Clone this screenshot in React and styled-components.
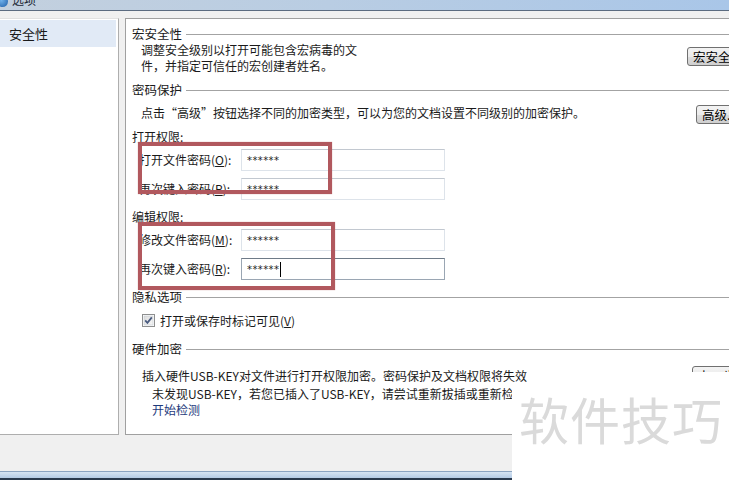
import React from 'react';
import styled, { createGlobalStyle } from 'styled-components';

const Global = createGlobalStyle`
  html, body {
    margin: 0;
    padding: 0;
    width: 729px;
    height: 480px;
    overflow: hidden;
    background: #f0f0f0;
  }
  body {
    font-family: "Noto Sans CJK SC", "Noto Sans", sans-serif;
    font-size: 12px;
    color: #1a1a1a;
  }
`;

const Window = styled.div`
  position: relative;
  width: 729px;
  height: 480px;
  overflow: hidden;
  display: flex;
  flex-direction: column;
  background: #f0f0f0;
`;

const TitleBar = styled.div`
  height: 10px;
  flex-shrink: 0;
  display: flex;
  align-items: flex-start;
  gap: 4px;
  overflow: hidden;
  background: linear-gradient(to right, #c3d0de 0%, #b9cde3 45%, #a9c6e8 100%);
  border-bottom: 1px solid #5b6b80;
`;

const TitleIcon = styled.div`
  width: 11px;
  height: 11px;
  margin: -4px 0 0 -3px;
  border-radius: 50%;
  background: radial-gradient(circle at 40% 40%, #6fb0ea, #1f5fa8);
`;

const TitleText = styled.span`
  margin-top: -8px;
  line-height: 16px;
  color: #1b2633;
`;

const Panels = styled.div`
  display: flex;
  gap: 6px;
  padding-top: 7px;
  height: 417px;
  flex-shrink: 0;
`;

const NavList = styled.div`
  width: 119px;
  flex-shrink: 0;
  background: #fff;
  border-right: 1px solid #aeaeae;
  border-bottom: 1px solid #aeaeae;
  border-top: 1px solid #e2e2e2;
  padding-top: 1px;
  box-sizing: border-box;
`;

const NavItem = styled.div`
  height: 27px;
  line-height: 27px;
  margin-right: 2px;
  padding-left: 9px;
  font-size: 13px;
  background: ${p => (p.$selected ? '#e1eaf6' : 'transparent')};
`;

const Content = styled.div`
  width: 670px;
  flex-shrink: 0;
  box-sizing: border-box;
  background: #fff;
  border: 1px solid #a0a0a0;
  padding: 7px 27px 0 6px;
  display: flex;
  flex-direction: column;
`;

const Heading = styled.div`
  display: flex;
  align-items: center;
  height: 16px;
  line-height: 16px;
  margin-top: ${p => p.$mt || 0}px;
  font-size: 12.5px;
  &::after {
    content: '';
    flex: 1;
    height: 1px;
    margin-left: 4px;
    background: #a3a3a3;
    margin-right: -27px;
  }
`;

const SubHeading = styled.div`
  height: 16px;
  line-height: 16px;
  margin-top: ${p => p.$mt || 0}px;
`;

const Row = styled.div`
  display: flex;
  justify-content: space-between;
  align-items: flex-start;
  margin-top: ${p => p.$mt || 0}px;
  padding-left: ${p => p.$indent || 9}px;
`;

const Text = styled.div`
  line-height: 16px;
  padding-left: ${p => p.$indent || 0}px;
  margin-top: ${p => p.$mt || 0}px;
  white-space: nowrap;
  color: ${p => p.$link ? '#1e3a7c' : 'inherit'};
`;

const Button = styled.button`
  width: ${p => p.$w}px;
  height: 19px;
  flex-shrink: 0;
  margin-top: ${p => p.$mt || 0}px;
  padding: 0 0 0 5px;
  text-align: left;
  font: inherit;
  font-size: 12.5px;
  line-height: 17px;
  color: #000;
  border: 1px solid #707070;
  border-radius: 3px;
  background: linear-gradient(#f3f3f3 0%, #ebebeb 50%, #dddddd 51%, #cfcfcf 100%);
  white-space: nowrap;
  overflow: hidden;
`;

const PwRow = styled.div`
  display: flex;
  align-items: center;
  margin-top: ${p => p.$mt}px;
  padding-left: 7px;
`;

const PwLabel = styled.label`
  width: 102px;
  flex-shrink: 0;
  line-height: 16px;
  white-space: nowrap;
`;

const PwInput = styled.div`
  width: 204px;
  height: 22px;
  box-sizing: border-box;
  display: flex;
  align-items: center;
  padding-left: 5px;
  border: 1px solid ${p => (p.$focused ? '#9aa6b3' : '#dde3ea')};
  border-top-color: ${p => (p.$focused ? '#6f7b88' : '#c2c8d0')};
  font-family: "DejaVu Sans", sans-serif;
  font-size: 10px;
  letter-spacing: 0.4px;
  color: #222;
`;

const Caret = styled.span`
  display: inline-block;
  width: 1px;
  height: 15px;
  margin-left: 1px;
  background: #000;
`;

const CheckRow = styled.div`
  display: flex;
  align-items: center;
  gap: 5px;
  height: 16px;
  margin-top: 7px;
  padding-left: 10px;
`;

const Footer = styled.div`
  height: 36px;
  flex-shrink: 0;
`;

const Taskbar = styled.div`
  flex: 1;
  border-top: 1px solid #8ba4c2;
  border-bottom: 2px solid #2a3a4e;
  background: linear-gradient(#d6e4f3, #b4cbe5);
`;

const Annotation = styled.div`
  position: absolute;
  left: ${p => p.$x}px;
  top: ${p => p.$y}px;
  width: ${p => p.$w}px;
  height: ${p => p.$h}px;
  box-sizing: border-box;
  border: 4px solid #b1585e;
  box-shadow: 0 0 1px rgba(177, 88, 94, 0.6);
`;

const Watermark = styled.div`
  position: absolute;
  left: 512px;
  top: 372px;
  right: 0;
  bottom: 0;
  background: #fff;
  clip-path: polygon(15px 0, 100% 0, 100% 100%, 0 100%, 0 14px, 15px 14px);
  padding: 21px 0 0 7px;
  font-size: 50px;
  line-height: 50px;
  letter-spacing: 1px;
  color: #dadada;
  white-space: nowrap;
`;

const CheckBox = () => (
  <svg width="13" height="13" viewBox="0 0 13 13">
    <defs>
      <linearGradient id="cb" x1="0" y1="0" x2="1" y2="1">
        <stop offset="0" stopColor="#dcdcdc" />
        <stop offset="1" stopColor="#f8f8f8" />
      </linearGradient>
    </defs>
    <rect x="0.5" y="0.5" width="12" height="12" fill="#fff" stroke="#8e8f8f" />
    <rect x="2" y="2" width="9" height="9" fill="url(#cb)" stroke="#c4c9d0" strokeWidth="0.6" />
    <path d="M3.2 6.4 L5.4 8.8 L9.8 3.4" fill="none" stroke="#4a5c80" strokeWidth="1.8" />
  </svg>
);

const Key = ({ k }) => (
  <>
    (<u>{k}</u>):
  </>
);

export default function App() {
  return (
    <Window>
      <Global />
      <TitleBar>
        <TitleIcon />
        <TitleText>选项</TitleText>
      </TitleBar>
      <Panels>
        <NavList>
          <NavItem $selected>安全性</NavItem>
        </NavList>
        <Content>
          <Heading>宏安全性</Heading>
          <Row>
            <div>
              <Text>调整安全级别以打开可能包含宏病毒的文</Text>
              <Text>件，并指定可信任的宏创建者姓名。</Text>
            </div>
            <Button $w={80} $mt={5}>宏安全性...</Button>
          </Row>

          <Heading $mt={8}>密码保护</Heading>
          <Row $mt={7}>
            <Text>点击“高级”按钮选择不同的加密类型，可以为您的文档设置不同级别的加密保护。</Text>
            <Button $w={71}>高级...</Button>
          </Row>

          <SubHeading $mt={5}>打开权限:</SubHeading>
          <PwRow $mt={4}>
            <PwLabel>打开文件密码<Key k="O" /></PwLabel>
            <PwInput>******</PwInput>
          </PwRow>
          <PwRow $mt={7}>
            <PwLabel>再次键入密码<Key k="P" /></PwLabel>
            <PwInput>******</PwInput>
          </PwRow>

          <SubHeading $mt={9}>编辑权限:</SubHeading>
          <PwRow $mt={4}>
            <PwLabel>修改文件密码<Key k="M" /></PwLabel>
            <PwInput>******</PwInput>
          </PwRow>
          <PwRow $mt={7}>
            <PwLabel>再次键入密码<Key k="R" /></PwLabel>
            <PwInput $focused>
              ******<Caret />
            </PwInput>
          </PwRow>

          <Heading $mt={9}>隐私选项</Heading>
          <CheckRow>
            <CheckBox />
            <span>打开或保存时标记可见(<u>V</u>)</span>
          </CheckRow>

          <Heading $mt={13}>硬件加密</Heading>
          <Row $mt={11} $indent={10}>
            <div>
              <Text>插入硬件USB-KEY对文件进行打开权限加密。密码保护及文档权限将失效。</Text>
              <Text $indent={10} $mt={2}>未发现USB-KEY，若您已插入了USB-KEY，请尝试重新拔插或重新检测</Text>
              <Text $indent={10} $link>开始检测</Text>
            </div>
            <Button $w={75} $mt={-2}>上一步...</Button>
          </Row>
        </Content>
      </Panels>
      <Footer />
      <Taskbar />

      <Annotation $x={138} $y={142} $w={194} $h={52} />
      <Annotation $x={138} $y={222} $w={197} $h={68} />
      <Watermark>软件技巧</Watermark>
    </Window>
  );
}
